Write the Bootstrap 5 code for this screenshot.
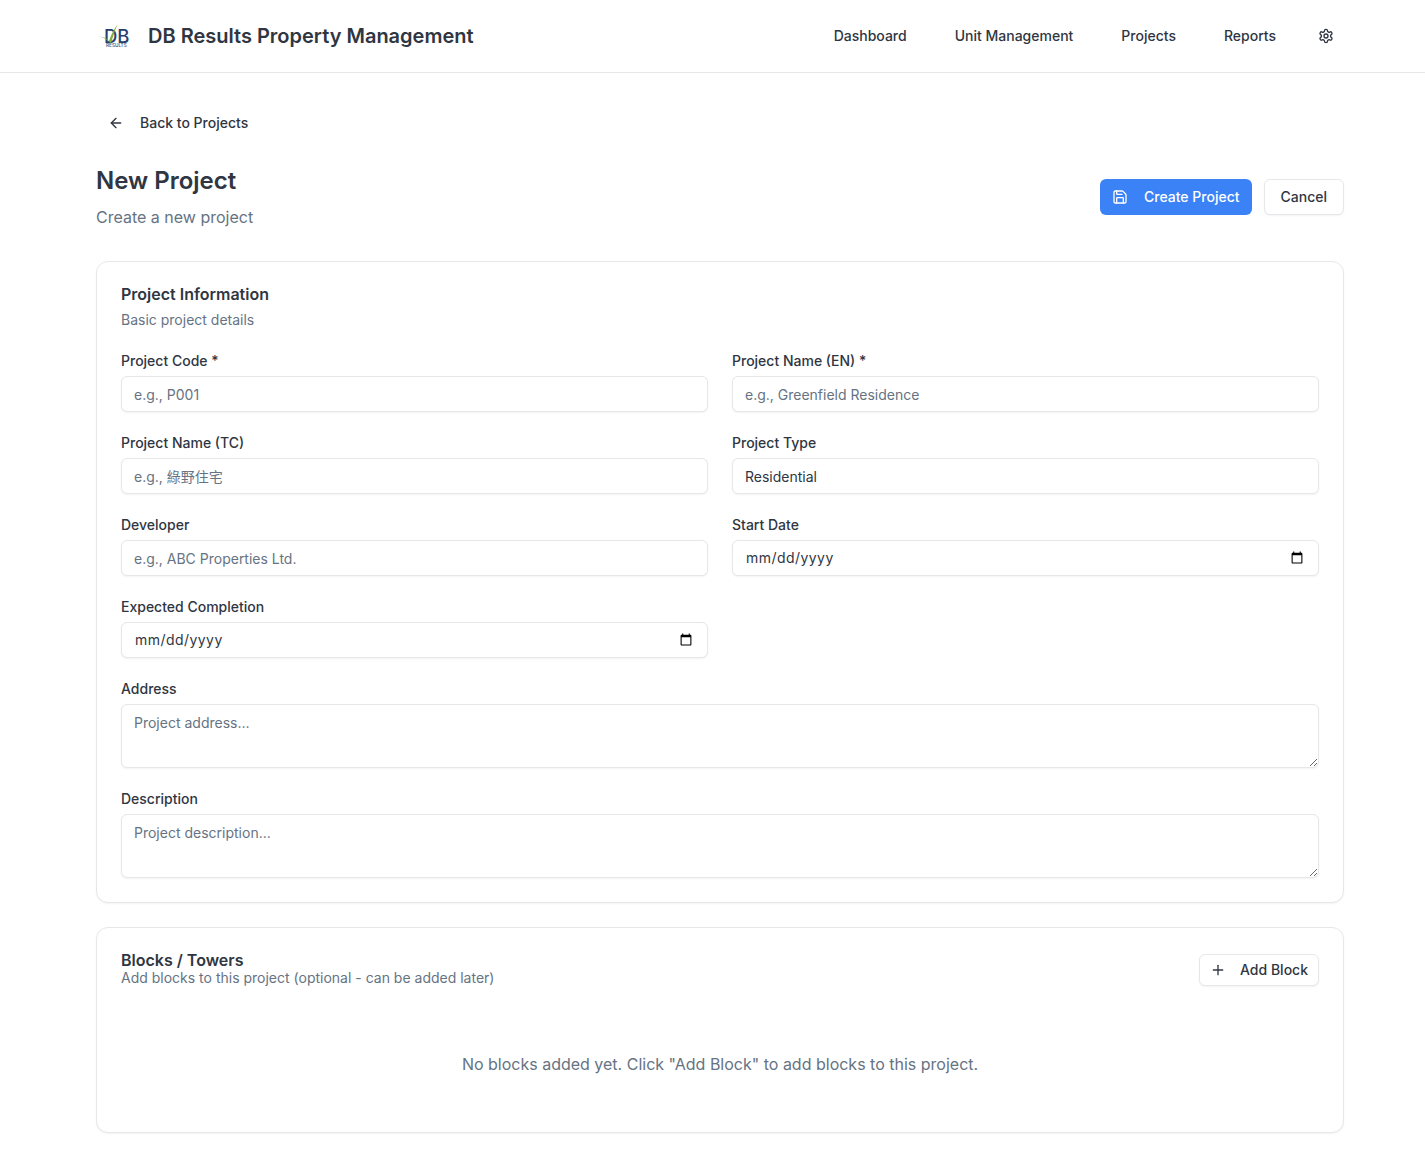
<!DOCTYPE html>
<html lang="en">
<head>
  <meta charset="UTF-8">
  <meta name="viewport" content="width=device-width, initial-scale=1.0">
  <title>New Project - DB Results Property Management</title>
  <link href="https://cdn.jsdelivr.net/npm/bootstrap@5.3.0/dist/css/bootstrap.min.css" rel="stylesheet">
  <style>
    body {
      background: #fff;
      color: #2f3642;
      font-family: Inter, "Noto Sans CJK TC", sans-serif;
      font-size: 14px;
    }

    .top-bar {
      height: 73px;
      padding: 0;
      border-bottom: 1px solid #e5e7eb;
    }

    .page-wrap {
      padding: 0 81px 0 96px;
    }

    .brand-logo {
      width: 36px;
      height: 30px;
      margin-right: 16px;
    }

    .brand-name {
      font-size: 20px;
      font-weight: 600;
      color: #2f3642;
      padding: 0;
      margin: 0;
    }

    .top-links {
      gap: 48px;
    }

    .top-links .nav-link {
      font-size: 14px;
      line-height: 20px;
      font-weight: 500;
      color: #2f3642;
      padding: 0;
    }

    .gear-link {
      margin: 0 10px 0 -6px;
    }

    .gear-link svg {
      display: block;
    }

    .icon-sm {
      width: 16px;
      height: 16px;
      flex: none;
      fill: none;
      stroke: currentColor;
      stroke-width: 2;
      stroke-linecap: round;
      stroke-linejoin: round;
    }

    .main-area {
      padding-top: 32px;
      padding-bottom: 32px;
    }

    .app-btn {
      display: inline-flex;
      align-items: center;
      gap: 16px;
      height: 36px;
      padding: 0 12px;
      font-size: 14px;
      line-height: 20px;
      font-weight: 500;
      border-radius: 6px;
      color: #2f3642;
    }

    .back-btn {
      border: 0;
      background: transparent;
      margin-bottom: 24px;
    }

    .back-btn:hover {
      color: #2f3642;
    }

    .save-btn {
      background: #3b82f6;
      border: 0;
      color: #fff;
    }

    .outline-btn {
      background: #fff;
      border: 1px solid #e5e7eb;
      box-shadow: 0 1px 2px rgba(0, 0, 0, .05);
    }

    .cancel-btn {
      padding: 0 16px;
    }

    .add-btn {
      height: 32px;
      padding: 0 10px;
      gap: 14px;
      margin-top: 2px;
    }

    .page-title {
      font-size: 24px;
      line-height: 32px;
      font-weight: 600;
      margin: 0 0 8px;
    }

    .page-sub {
      font-size: 16px;
      line-height: 24px;
      color: #667383;
      margin: 0;
    }

    .head-row {
      margin-bottom: 32px;
    }

    .head-actions {
      gap: 12px;
    }

    .form-panel {
      border: 1px solid #e5e7eb;
      border-radius: 12px;
      box-shadow: 0 1px 2px rgba(0, 0, 0, .05);
      margin-bottom: 24px;
    }

    .form-panel .card-body {
      padding: 23px 24px 24px;
    }

    .panel-title {
      font-size: 16px;
      line-height: 18px;
      font-weight: 600;
      margin: 0;
    }

    .panel-sub {
      font-size: 14px;
      line-height: 20px;
      color: #667383;
      margin: 7px 0 0;
    }

    .panel-head {
      margin-bottom: 24px;
    }

    .panel-sub-tight {
      margin-top: 0;
      line-height: 18px;
    }

    .field-label {
      display: block;
      font-size: 14px;
      line-height: 14px;
      font-weight: 500;
      margin-bottom: 8px;
    }

    .field-input {
      height: 36px;
      padding: 4px 12px;
      font-size: 14px;
      line-height: 20px;
      color: #2f3642;
      border: 1px solid #e5e7eb;
      border-radius: 6px;
      box-shadow: 0 1px 2px rgba(0, 0, 0, .05);
    }

    .field-input::placeholder {
      color: #667383;
      opacity: 1;
    }

    .field-input::-webkit-datetime-edit {
      padding-left: 1px;
      letter-spacing: .45px;
    }

    textarea.field-input {
      height: 64px;
      min-height: 64px;
      padding: 8px 12px;
    }

    select.field-input {
      padding-top: 6px;
      padding-bottom: 4px;
      background-image: none;
      appearance: none;
    }

    .empty-note {
      font-size: 16px;
      line-height: 24px;
      color: #667383;
      text-align: center;
      padding: 65px 0 32px;
      margin: 0;
    }
  </style>
</head>

<body>
  <nav class="navbar top-bar">
    <div class="page-wrap w-100 d-flex align-items-center justify-content-between">
      <a class="navbar-brand brand-name d-flex align-items-center" href="#">
        <svg class="brand-logo" viewBox="0 0 36 30" aria-hidden="true">
          <text x="8" y="22" font-family="Inter, sans-serif" font-size="18.500" font-weight="500" fill="#27406f">DB</text>
          <text x="10" y="26" font-family="Inter, sans-serif" font-size="4.700" fill="#4c5f85">RESULTS</text>
          <path d="M3 15.500 C7 16 10.500 17 13 20 C15 14 18 8 21.500 3.500 C19 9 17 15 15 22.500 C12 19 8 16.500 3 15.500z" fill="#7fae3c"/>
        </svg>
        DB Results Property Management
      </a>
      <ul class="nav top-links align-items-center">
        <li class="nav-item"><a class="nav-link" href="#">Dashboard</a></li>
        <li class="nav-item"><a class="nav-link" href="#">Unit Management</a></li>
        <li class="nav-item"><a class="nav-link" href="#">Projects</a></li>
        <li class="nav-item"><a class="nav-link" href="#">Reports</a></li>
        <li class="nav-item gear-link">
          <a class="nav-link" href="#" aria-label="Settings">
            <svg class="icon-sm" viewBox="0 0 24 24"><path d="M12.220 2h-.44a2 2 0 0 0-2 2v.18a2 2 0 0 1-1 1.730l-.43.25a2 2 0 0 1-2 0l-.15-.08a2 2 0 0 0-2.730.73l-.22.38a2 2 0 0 0 .73 2.730l.15.1a2 2 0 0 1 1 1.720v.51a2 2 0 0 1-1 1.740l-.15.09a2 2 0 0 0-.73 2.730l.22.38a2 2 0 0 0 2.730.73l.15-.08a2 2 0 0 1 2 0l.43.25a2 2 0 0 1 1 1.730V20a2 2 0 0 0 2 2h.44a2 2 0 0 0 2-2v-.18a2 2 0 0 1 1-1.730l.43-.25a2 2 0 0 1 2 0l.15.08a2 2 0 0 0 2.730-.73l.22-.39a2 2 0 0 0-.73-2.730l-.15-.08a2 2 0 0 1-1-1.740v-.5a2 2 0 0 1 1-1.740l.15-.09a2 2 0 0 0 .73-2.730l-.22-.38a2 2 0 0 0-2.730-.73l-.15.08a2 2 0 0 1-2 0l-.43-.25a2 2 0 0 1-1-1.730V4a2 2 0 0 0-2-2z"/><circle cx="12" cy="12" r="3"/></svg>
          </a>
        </li>
      </ul>
    </div>
  </nav>

  <main class="page-wrap main-area">
    <a class="btn app-btn back-btn" href="#">
      <svg class="icon-sm" viewBox="0 0 24 24"><path d="m12 19-7-7 7-7"/><path d="M19 12H5"/></svg>
      Back to Projects
    </a>

    <div class="d-flex justify-content-between align-items-center head-row">
      <div>
        <h1 class="page-title">New Project</h1>
        <p class="page-sub">Create a new project</p>
      </div>
      <div class="d-flex head-actions">
        <button type="button" class="btn app-btn save-btn">
          <svg class="icon-sm" viewBox="0 0 24 24"><path d="M15.200 3a2 2 0 0 1 1.400.6l3.800 3.800a2 2 0 0 1 .6 1.400V19a2 2 0 0 1-2 2H5a2 2 0 0 1-2-2V5a2 2 0 0 1 2-2z"/><path d="M17 21v-7a1 1 0 0 0-1-1H8a1 1 0 0 0-1 1v7"/><path d="M7 3v4a1 1 0 0 0 1 1h7"/></svg>
          Create Project
        </button>
        <button type="button" class="btn app-btn outline-btn cancel-btn">Cancel</button>
      </div>
    </div>

    <section class="card form-panel">
      <div class="card-body">
        <div class="panel-head">
          <h2 class="panel-title">Project Information</h2>
          <p class="panel-sub">Basic project details</p>
        </div>
        <form class="row g-4">
          <div class="col-6">
            <label class="field-label" for="code">Project Code *</label>
            <input class="form-control field-input" id="code" type="text" placeholder="e.g., P001">
          </div>
          <div class="col-6">
            <label class="field-label" for="nameEn">Project Name (EN) *</label>
            <input class="form-control field-input" id="nameEn" type="text" placeholder="e.g., Greenfield Residence">
          </div>
          <div class="col-6">
            <label class="field-label" for="nameTc">Project Name (TC)</label>
            <input class="form-control field-input" id="nameTc" type="text" placeholder="e.g., 綠野住宅">
          </div>
          <div class="col-6">
            <label class="field-label" for="ptype">Project Type</label>
            <select class="form-select field-input" id="ptype">
              <option>Residential</option>
              <option>Commercial</option>
            </select>
          </div>
          <div class="col-6">
            <label class="field-label" for="developer">Developer</label>
            <input class="form-control field-input" id="developer" type="text" placeholder="e.g., ABC Properties Ltd.">
          </div>
          <div class="col-6">
            <label class="field-label" for="startDate">Start Date</label>
            <input class="form-control field-input" id="startDate" type="date">
          </div>
          <div class="col-6">
            <label class="field-label" for="endDate">Expected Completion</label>
            <input class="form-control field-input" id="endDate" type="date">
          </div>
          <div class="col-12">
            <label class="field-label" for="address">Address</label>
            <textarea class="form-control field-input" id="address" placeholder="Project address..."></textarea>
          </div>
          <div class="col-12">
            <label class="field-label" for="description">Description</label>
            <textarea class="form-control field-input" id="description" placeholder="Project description..."></textarea>
          </div>
        </form>
      </div>
    </section>

    <section class="card form-panel mb-0">
      <div class="card-body">
        <div class="d-flex justify-content-between align-items-center">
          <div>
            <h2 class="panel-title">Blocks / Towers</h2>
            <p class="panel-sub panel-sub-tight">Add blocks to this project (optional - can be added later)</p>
          </div>
          <button type="button" class="btn app-btn outline-btn add-btn">
            <svg class="icon-sm" viewBox="0 0 24 24"><path d="M5 12h14"/><path d="M12 5v14"/></svg>
            Add Block
          </button>
        </div>
        <p class="empty-note">No blocks added yet. Click "Add Block" to add blocks to this project.</p>
      </div>
    </section>
  </main>

  <script src="https://cdn.jsdelivr.net/npm/bootstrap@5.3.0/dist/js/bootstrap.bundle.min.js"></script>
</body>
</html>
